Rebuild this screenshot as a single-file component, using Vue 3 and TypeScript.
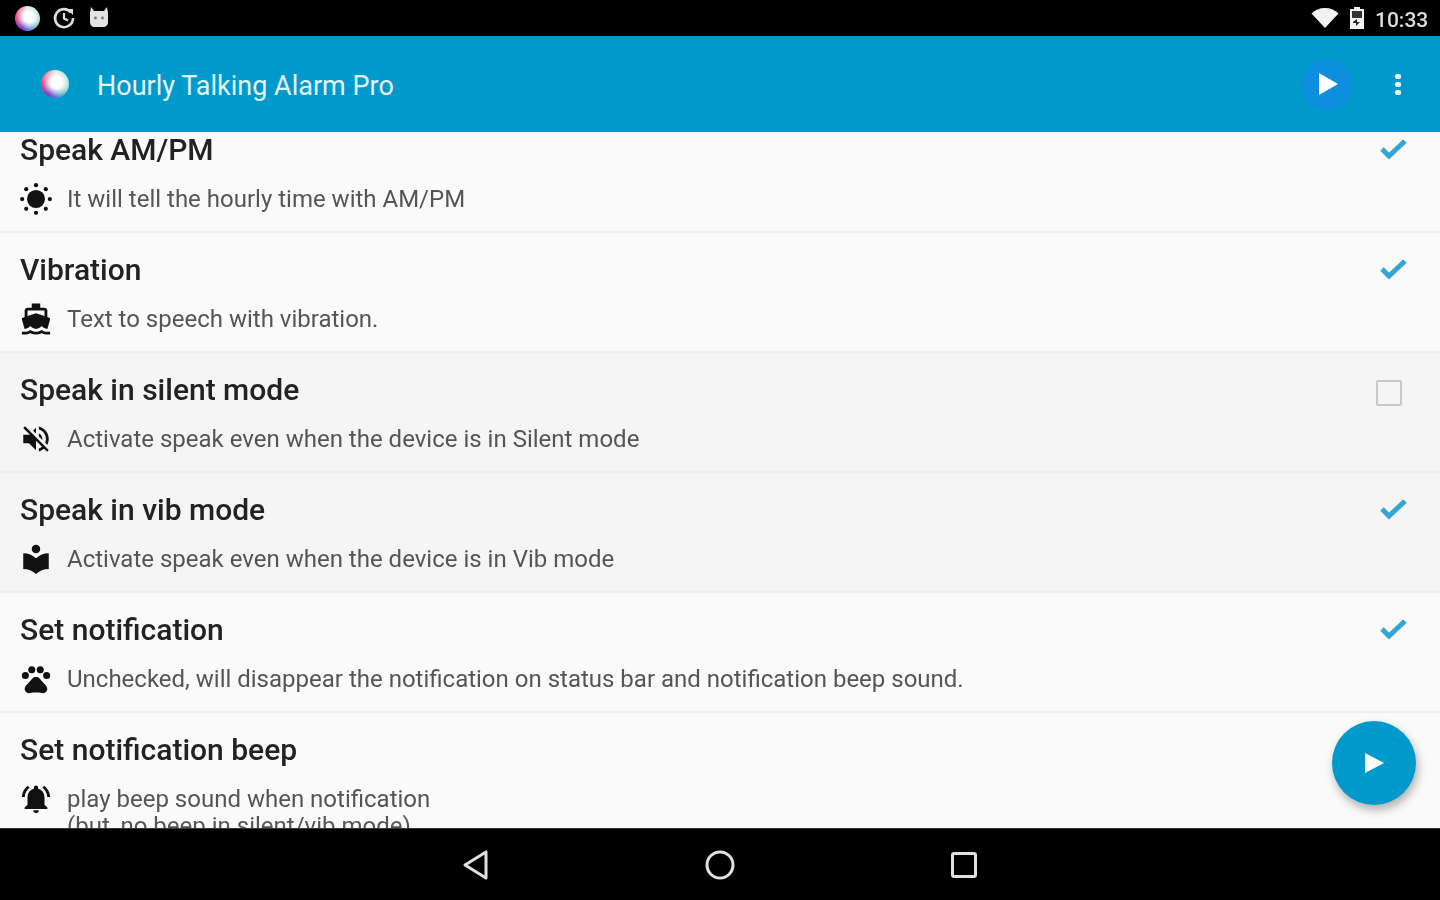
<template>
  <div class="screen">
    <div class="status-bar">
      <span class="logo logo-small"></span>
      <svg class="status-alarm" width="24" height="24" viewBox="0 0 24 24" fill="none" stroke="#ddd" stroke-width="2.6">
        <path d="M19 6.500A9 9 0 1 0 21 12"/>
        <path d="M12 7v5.500l4 2" stroke-width="2.200"/>
        <path d="M15 3h6v6z" fill="#ddd" stroke="none"/>
      </svg>
      <svg class="status-cat" width="22" height="24" viewBox="0 0 22 24">
        <path d="M3 2l3 4h10l3-4 1 6v9c0 3-2 5-5 5H7c-3 0-5-2-5-5V8z" fill="#e4e4e4"/>
        <circle cx="7.500" cy="13" r="1.400" fill="#777"/>
        <circle cx="14.500" cy="13" r="1.400" fill="#777"/>
      </svg>
      <span class="status-spacer"></span>
      <svg class="status-wifi" width="28" height="22" viewBox="0 0 28 22">
        <path d="M0.500 6.500C4 3 8.500 1 14 1s10 2 13.500 5.500L14 21z" fill="#f2f2f2"/>
      </svg>
      <svg class="status-battery" width="16" height="24" viewBox="0 0 16 24">
        <path d="M5 1h6v2h4v20H1V3h4z" fill="#f2f2f2"/>
        <path d="M3 5h10v7H3z" fill="#333"/>
        <path d="M4 16l4 -3v3h3l-4 4v-3H4z" fill="#222"/>
      </svg>
      <span class="status-time">10:33</span>
    </div>

    <header class="app-bar">
      <span class="logo logo-large"></span>
      <span class="app-title">Hourly Talking Alarm Pro</span>
      <span class="app-spacer"></span>
      <button class="play-btn">
        <svg width="20" height="22" viewBox="0 0 20 22"><path d="M1 0l19 11L1 22z" fill="#fff"/></svg>
      </button>
      <span class="more">
        <i></i><i></i><i></i>
      </span>
    </header>

    <main class="content">
      <div class="list">
        <div v-for="item in items" :key="item.title" class="row" :class="{ shaded: item.shaded }">
          <div class="row-main">
            <div class="row-title">{{ item.title }}</div>
            <div class="row-sub">
              <svg v-if="item.icon === 'sun'" class="row-icon" viewBox="0 0 32 32" fill="#111">
                <circle cx="16" cy="16" r="8.500"/>
                <circle v-for="d in sunDots" :key="d[0] + '-' + d[1]" :cx="d[0]" :cy="d[1]" r="2"/>
              </svg>
              <svg v-else class="row-icon" viewBox="0 0 24 24" fill="#111">
                <path :d="icons[item.icon]"/>
              </svg>
              <div class="row-text">
                <div v-for="line in item.lines" :key="line">{{ line }}</div>
              </div>
            </div>
          </div>
          <svg v-if="item.checked" class="check" width="28" height="24" viewBox="0 0 28 24" fill="none" stroke="#33a5d8" stroke-width="5">
            <path d="M3 12l7 7L26 4"/>
          </svg>
          <span v-else-if="item.box" class="checkbox"></span>
        </div>
      </div>

      <button class="fab">
        <svg width="19" height="20" viewBox="0 0 19 20"><path d="M0 0l19 10L0 20z" fill="#fff"/></svg>
      </button>
    </main>

    <nav class="nav-bar">
      <div class="nav-cell">
        <svg width="28" height="32" viewBox="0 0 28 32" fill="none" stroke="#e0e0e0" stroke-width="3" stroke-linejoin="round">
          <path d="M24 3v26L3 16z"/>
        </svg>
      </div>
      <div class="nav-cell">
        <svg width="32" height="32" viewBox="0 0 32 32" fill="none" stroke="#e0e0e0" stroke-width="3">
          <circle cx="16" cy="16" r="13"/>
        </svg>
      </div>
      <div class="nav-cell">
        <svg width="28" height="28" viewBox="0 0 28 28" fill="none" stroke="#e0e0e0" stroke-width="3" stroke-linejoin="round">
          <rect x="2.500" y="2.500" width="23" height="23" rx="1.500"/>
        </svg>
      </div>
    </nav>
  </div>
</template>

<script setup lang="ts">
interface Item {
  title: string
  lines: string[]
  icon: string
  checked: boolean
  box?: boolean
  shaded?: boolean
}

const icons: Record<string, string> = {
  boat: 'M20 21c-1.390 0-2.780-.47-4-1.320-2.440 1.710-5.560 1.710-8 0C6.780 20.530 5.390 21 4 21H2v2h2c1.380 0 2.740-.35 4-.99 2.520 1.290 5.480 1.290 8 0 1.260.65 2.620.99 4 .99h2v-2h-2zM3.950 19H4c1.600 0 3.020-.88 4-2 .98 1.120 2.400 2 4 2s3.020-.88 4-2c.98 1.120 2.400 2 4 2h.05l1.890-6.680c.08-.26.06-.54-.06-.78s-.34-.42-.6-.5L20 10.620V6c0-1.100-.9-2-2-2h-3V1H9v3H6c-1.100 0-2 .9-2 2v4.620l-1.290.42c-.26.08-.48.26-.6.5s-.15.52-.06.78L3.950 19zM6 6h12v3.970L12 8 6 9.970V6z',
  mute: 'M16.500 12c0-1.770-1.020-3.290-2.500-4.030v2.210l2.450 2.450c.03-.2.05-.41.05-.63zm2.500 0c0 .94-.2 1.820-.54 2.640l1.510 1.510C20.630 14.910 21 13.500 21 12c0-4.280-2.990-7.860-7-8.770v2.060c2.890.86 5 3.540 5 6.710zM4.270 3L3 4.270 7.730 9H3v6h4l5 5v-6.730l4.250 4.250c-.67.52-1.420.93-2.250 1.180v2.060c1.380-.31 2.630-.95 3.690-1.810L19.730 21 21 19.730l-9-9L4.270 3zM12 4L9.910 6.090 12 8.180V4z',
  reader: 'M12 11.550C9.640 9.350 6.480 8 3 8v11c3.480 0 6.640 1.350 9 3.550 2.360-2.190 5.520-3.550 9-3.550V8c-3.480 0-6.640 1.350-9 3.550zM12 8c1.660 0 3-1.340 3-3s-1.340-3-3-3-3 1.340-3 3 1.340 3 3 3z',
  paw: 'M2 9.500a2.500 2.500 0 1 0 5 0a2.500 2.500 0 1 0-5 0M6.500 5.500a2.500 2.500 0 1 0 5 0a2.500 2.500 0 1 0-5 0M12.500 5.500a2.500 2.500 0 1 0 5 0a2.500 2.500 0 1 0-5 0M17 9.500a2.500 2.500 0 1 0 5 0a2.500 2.500 0 1 0-5 0M17.340 14.860c-.87-1.020-1.600-1.890-2.480-2.910-.46-.54-1.050-1.080-1.750-1.320-.11-.04-.22-.07-.33-.09-.25-.04-.52-.04-.78-.04s-.53 0-.79.05c-.11.02-.22.05-.33.09-.7.24-1.280.78-1.750 1.320-.87 1.020-1.600 1.890-2.480 2.910-1.310 1.310-2.920 2.760-2.620 4.790.29 1.020 1.020 2.030 2.330 2.320.73.15 3.060-.44 5.540-.44h.18c2.480 0 4.810.58 5.540.44 1.310-.29 2.040-1.310 2.330-2.320.31-2.040-1.300-3.490-2.610-4.800z',
  bell: 'M7.580 4.080L6.150 2.650C3.750 4.480 2.170 7.300 2.030 10.500h2c.15-2.650 1.510-4.970 3.550-6.420zm12.390 6.420h2c-.15-3.200-1.730-6.020-4.120-7.850l-1.420 1.430c2.020 1.450 3.390 3.770 3.540 6.420zM18 11c0-3.070-1.640-5.640-4.500-6.320V4c0-.83-.67-1.500-1.500-1.500s-1.500.67-1.500 1.500v.68C7.630 5.360 6 7.920 6 11v5l-2 2v1h16v-1l-2-2v-5zm-6 11c.14 0 .27-.01.4-.04.65-.14 1.180-.58 1.440-1.180.1-.24.15-.5.15-.78h-4c.01 1.100.9 2 2.010 2z'
}

const sunDots = [
  [16, 3], [16, 29], [3, 16], [29, 16],
  [6.800, 6.800], [25.200, 6.800], [6.800, 25.200], [25.200, 25.200]
]

const items: Item[] = [
  { title: 'Speak AM/PM', lines: ['It will tell the hourly time with AM/PM'], icon: 'sun', checked: true },
  { title: 'Vibration', lines: ['Text to speech with vibration.'], icon: 'boat', checked: true },
  { title: 'Speak in silent mode', lines: ['Activate speak even when the device is in Silent mode'], icon: 'mute', checked: false, box: true, shaded: true },
  { title: 'Speak in vib mode', lines: ['Activate speak even when the device is in Vib mode'], icon: 'reader', checked: true, shaded: true },
  { title: 'Set notification', lines: ['Unchecked, will disappear the notification on status bar and notification beep sound.'], icon: 'paw', checked: true },
  { title: 'Set notification beep', lines: ['play beep sound when notification', '(but, no beep in silent/vib mode)'], icon: 'bell', checked: false }
]
</script>

<style>
html, body {
  margin: 0;
  background: #000;
}
</style>

<style scoped>
.screen {
  width: 1440px;
  height: 900px;
  display: flex;
  flex-direction: column;
  overflow: hidden;
  font-family: Roboto, "Liberation Sans", sans-serif;
  filter: blur(0.7px);
}

.status-bar {
  height: 36px;
  flex-shrink: 0;
  background: #000;
  display: flex;
  align-items: center;
  padding: 0 12px 0 15px;
  box-sizing: border-box;
}

.status-alarm {
  margin-left: 12px;
}

.status-cat {
  margin-left: 12px;
  margin-top: -2px;
}

.status-spacer,
.app-spacer {
  flex: 1;
}

.status-wifi {
  margin-right: 2px;
}

.status-battery {
  margin-left: 8px;
}

.status-time {
  margin-left: 10px;
  margin-top: 3px;
  width: 53px;
  color: #dcdcdc;
  font-size: 21px;
  font-weight: 500;
}

.logo {
  display: block;
  border-radius: 50%;
  flex-shrink: 0;
  background:
    radial-gradient(circle at 55% 45%, #fff 0, #fff 26%, rgba(255, 255, 255, 0) 64%),
    conic-gradient(#c9e6df 0deg, #8fd6c4 110deg, #5a8ad8 170deg, #7b3fc4 210deg, #ea4f86 280deg, #f3a0b0 340deg, #c9e6df 360deg);
}

.logo-small {
  width: 25px;
  height: 25px;
}

.logo-large {
  width: 28px;
  height: 28px;
}

.app-bar {
  height: 96px;
  flex-shrink: 0;
  background: #0099cc;
  display: flex;
  align-items: center;
  padding: 0 39px 0 41px;
  box-sizing: border-box;
  position: relative;
  z-index: 1;
}

.app-title {
  margin-left: 28px;
  margin-top: 3px;
  color: #e3f4fa;
  font-size: 27px;
}

.play-btn {
  width: 50px;
  height: 50px;
  border: none;
  padding: 0 0 0 1px;
  border-radius: 50%;
  background: #0e8fdf;
  display: flex;
  align-items: center;
  justify-content: center;
}

.more {
  margin-left: 43px;
  width: 6px;
  display: flex;
  flex-direction: column;
  gap: 3px;
}

.more i {
  width: 6px;
  height: 5px;
  border-radius: 2px;
  background: #f0f8fb;
}

.content {
  flex: 1;
  min-height: 0;
  position: relative;
  overflow: hidden;
  background: #fafafa;
}

.list {
  margin-top: -19px;
}

.row {
  height: 120px;
  box-sizing: border-box;
  display: flex;
  justify-content: space-between;
  padding: 20px 33px 0 20px;
  background: #fafafa;
  border-bottom: 2px solid #eeeeee;
  overflow: hidden;
}

.row.shaded {
  background: #f5f5f5;
}

.row-title {
  font-size: 30px;
  font-weight: 500;
  line-height: 34px;
  color: #222;
}

.row-sub {
  display: flex;
  margin-top: 19px;
}

.row-icon {
  width: 34px;
  height: 34px;
  flex-shrink: 0;
  margin: -4px 14px 0 -1px;
}

.row-text {
  font-size: 24px;
  line-height: 27px;
  color: #555;
}

.check {
  margin-top: 4px;
}

.checkbox {
  width: 26px;
  height: 26px;
  margin-top: 7px;
  margin-right: 5px;
  box-sizing: border-box;
  border: 2px solid #c8c8c8;
  border-radius: 2px;
}

.fab {
  position: absolute;
  left: 1332px;
  top: 589px;
  width: 84px;
  height: 84px;
  border: none;
  padding: 0;
  border-radius: 50%;
  background: #0099cc;
  box-shadow: 2px 5px 10px rgba(0, 0, 0, 0.3);
  display: flex;
  align-items: center;
  justify-content: center;
}

.nav-bar {
  height: 72px;
  flex-shrink: 0;
  background: #000;
  border-top: 1px solid #333;
  box-sizing: border-box;
  display: grid;
  grid-template-columns: repeat(3, 244px);
  justify-content: center;
  align-items: center;
}

.nav-cell {
  display: flex;
  justify-content: center;
  align-items: center;
}
</style>
